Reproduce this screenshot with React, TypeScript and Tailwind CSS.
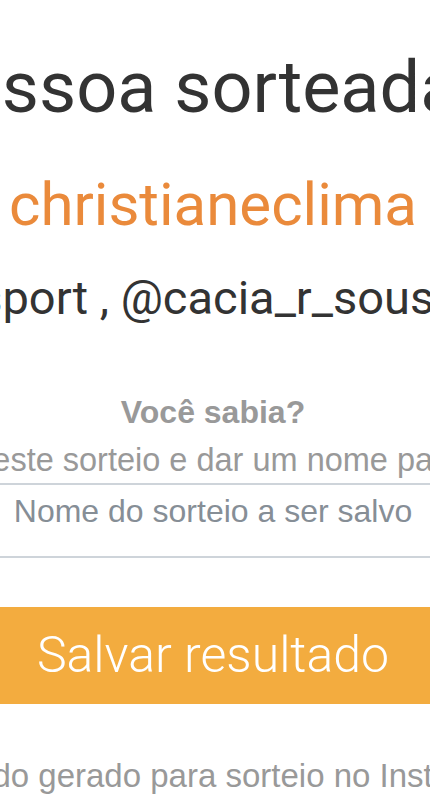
export default function App() {
	return (
		<div className="w-full h-[806px] overflow-hidden bg-white">
			<main className="flex flex-col items-center">
				<h1 className="mt-[52px] whitespace-nowrap pr-[52px] font-['Roboto',sans-serif] text-[72px] leading-none font-normal text-[#333333]">
					Pessoa sorteada
				</h1>
				<h2 className="mt-[51px] whitespace-nowrap pr-1 font-['Roboto',sans-serif] text-[60px] leading-none font-normal text-[#ea8a3b]">
					christianeclima
				</h2>
				<p className="mt-[39px] whitespace-nowrap pr-[124px] font-['Roboto',sans-serif] text-[47px] leading-none text-[#333333]">
					@gabisport , @cacia_r_sousa
				</p>

				<p className="mt-[75px] whitespace-nowrap pr-1 font-['Liberation_Sans',Arial,sans-serif] text-[32px] leading-none font-bold text-[#999999]">
					Você sabia?
				</p>
				<p className="mt-[16px] whitespace-nowrap pr-[28px] font-['Liberation_Sans',Arial,sans-serif] text-[32.5px] leading-none text-[#999999]">
					É possível salvar o resultado deste sorteio e dar um nome para ele, para consultar depois.
				</p>
				<input
					type="text"
					placeholder="Nome do sorteio a ser salvo"
					className="mt-[6px] h-[75px] w-full border-y-2 border-[#ced4da] bg-white pt-0 pb-[17px] pr-1 text-center font-['Liberation_Sans',Arial,sans-serif] text-[32px] text-[#495057] outline-none placeholder:text-[#868e96]"
				/>

				<button className="mt-[49px] h-[97px] w-full bg-[#f3ac3f] pr-1 font-['Roboto',sans-serif] text-[50px] leading-none font-light text-white">
					Salvar resultado
				</button>

				<p className="mt-[55px] whitespace-nowrap pr-[14px] font-['Liberation_Sans',Arial,sans-serif] text-[33px] leading-none text-[#999999]">
					Resultado gerado para sorteio no Instagram.
				</p>
			</main>
		</div>
	);
}
